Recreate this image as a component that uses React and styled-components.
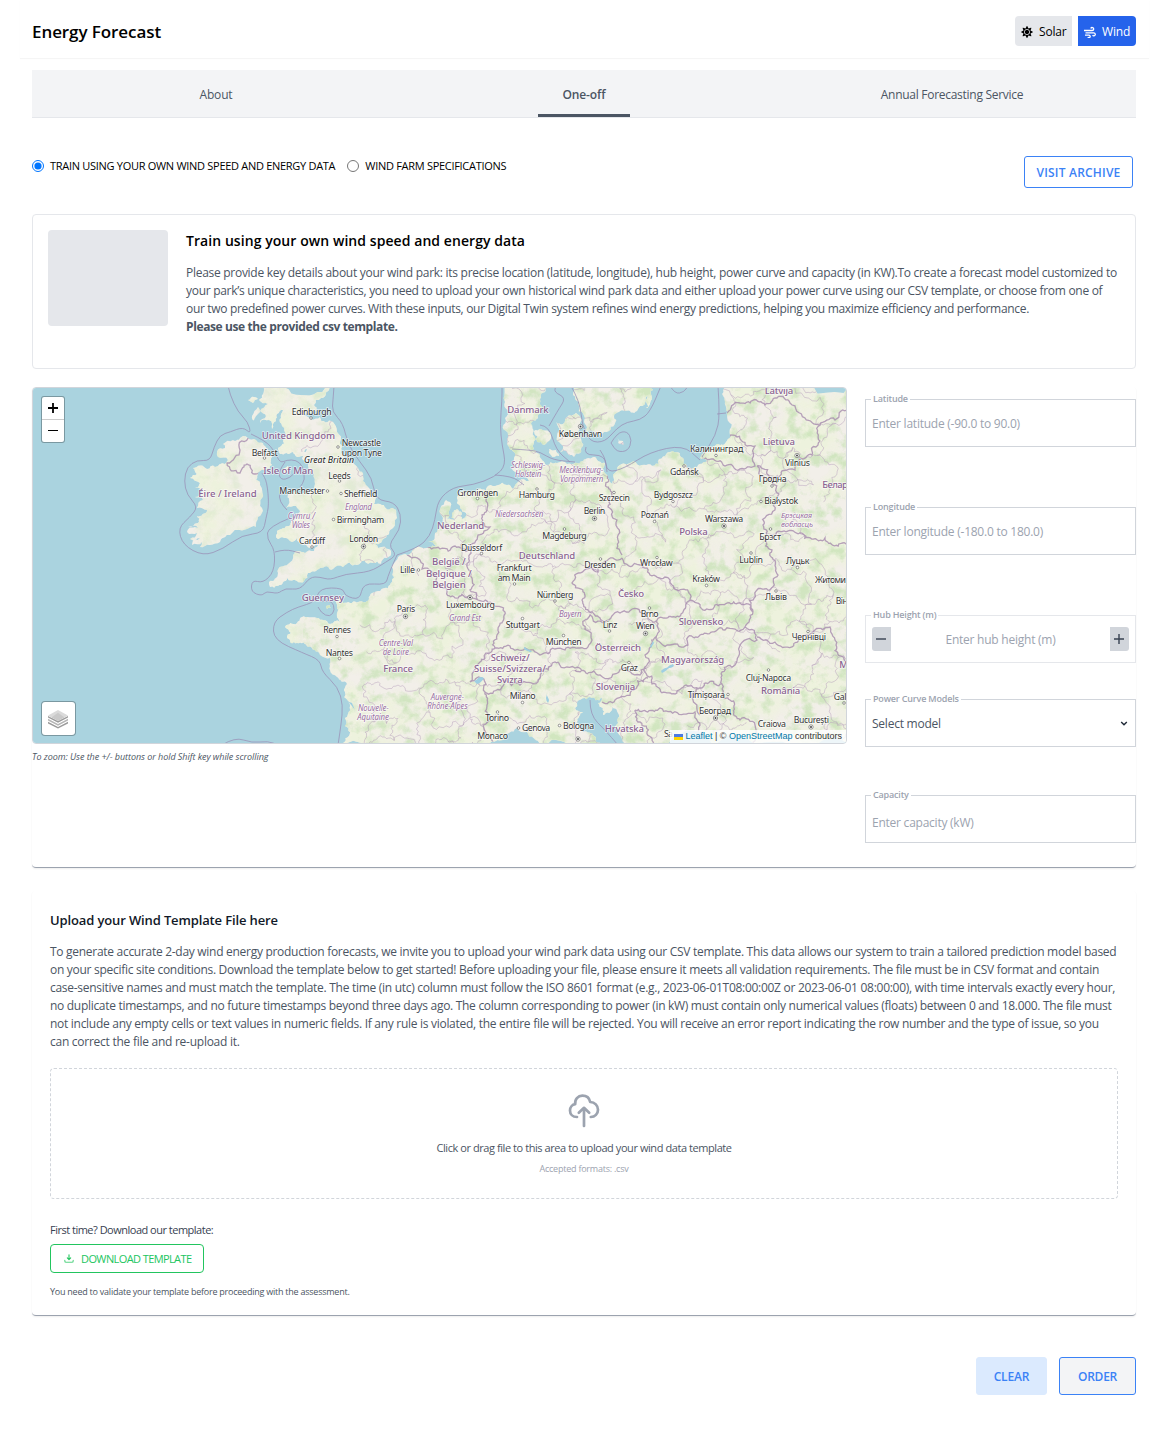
import React from "react";
import styled, { createGlobalStyle, css } from "styled-components";
import { FaSun } from "react-icons/fa";

const GlobalStyle = createGlobalStyle`
  *, *::before, *::after { box-sizing: border-box; }
  body {
    margin: 0;
    background: #fff;
    color: #000;
    font-family: "Open Sans", "Noto Sans", sans-serif;
    font-size: 12px;
    line-height: 18px;
  }
  h1, h2, h3, p { margin: 0; }
  button, input { font-family: inherit; }
`;

/* ---------- shell ---------- */

const Page = styled.div`
  display: flex;
  flex-direction: column;
  min-height: 1429px;
  padding: 0 20px;
`;

const Header = styled.header`
  display: flex;
  align-items: center;
  justify-content: space-between;
  height: 58px;
  padding: 4px 13px 0 12px;
  box-shadow: 0 1px 1px rgba(0, 0, 0, 0.04);
`;

const Title = styled.h1`
  padding-top: 2px;
  font-size: 17px;
  font-weight: 600;
  line-height: 24px;
  letter-spacing: -0.08px;
`;

const EnergySwitch = styled.div`
  display: flex;
  gap: 6px;
`;

const EnergyButton = styled.button`
  display: flex;
  align-items: center;
  gap: 6px;
  width: ${(p) => (p.$active ? 58 : 57)}px;
  height: 30px;
  padding: 1px 0 0 6px;
  border: 0;
  border-radius: ${(p) => (p.$active ? "0 4px 4px 0" : "4px 0 0 4px")};
  background: ${(p) => (p.$active ? "#2563eb" : "#e5e7eb")};
  color: ${(p) => (p.$active ? "#fff" : "#000")};
  font-size: 12px;
  letter-spacing: -0.19px;
`;

const Content = styled.main`
  display: flex;
  flex-direction: column;
  width: 1104px;
  margin: 12px 0 0 12px;
`;

/* ---------- tabs ---------- */

const Tabs = styled.nav`
  display: grid;
  grid-template-columns: repeat(3, 1fr);
  height: 48px;
  background: #f3f4f6;
  border-bottom: 1px solid #e5e7eb;
`;

const Tab = styled.a`
  display: flex;
  justify-content: center;
  justify-self: center;
  align-items: center;
  height: 47px;
  padding: 5px 24.4px 0;
  border-bottom: 3px solid ${(p) => (p.$active ? "#4b5563" : "transparent")};
  color: #4b5563;
  font-weight: ${(p) => (p.$active ? 600 : 400)};
  letter-spacing: ${(p) => p.$spacing}px;
`;

/* ---------- mode row ---------- */

const ModeRow = styled.div`
  display: flex;
  justify-content: space-between;
  align-items: flex-start;
  height: 96px;
  padding: 38px 3px 0 0;
`;

const ModeList = styled.div`
  display: flex;
  gap: 12px;
  padding-top: 1px;
`;

const ModeOption = styled.label`
  display: flex;
  align-items: center;
  gap: 6px;
  font-size: 11px;
  font-weight: 500;
  letter-spacing: -0.29px;
  white-space: nowrap;
`;

const Radio = styled.input`
  width: 12px;
  height: 12px;
  margin: 0;
  accent-color: #0075ff;
`;

const ArchiveButton = styled.button`
  width: 109px;
  height: 32px;
  padding: 0;
  border: 1px solid #3b82f6;
  border-radius: 3px;
  background: #fff;
  color: #3b82f6;
  font-size: 12px;
  font-weight: 600;
  letter-spacing: 0.2px;
`;

/* ---------- info card ---------- */

const InfoCard = styled.section`
  display: flex;
  gap: 18px;
  height: 155px;
  padding: 15px;
  border: 1px solid #e5e7eb;
  border-radius: 4px;
`;

const Thumbnail = styled.div`
  width: 120px;
  height: 96px;
  border-radius: 4px;
  background: #e5e7eb;
`;

const InfoHeading = styled.h2`
  margin-bottom: 12px;
  font-size: 14px;
  font-weight: 600;
  line-height: 22px;
  letter-spacing: 0.066px;
`;

const Line = styled.p`
  height: 18px;
  color: #4b5563;
  font-weight: ${(p) => (p.$bold ? 700 : 400)};
  letter-spacing: ${(p) => p.$spacing}px;
  white-space: nowrap;
`;

/* ---------- location panel ---------- */

const panel = css`
  border-bottom: 1px solid #9ca3af;
  border-radius: 4px;
  box-shadow: 0 1px 2px rgba(0, 0, 0, 0.07);
`;

const LocationPanel = styled.section`
  ${panel}
  display: flex;
  gap: 18px;
  height: 481px;
  margin-top: 18px;
`;

const MapColumn = styled.div`
  width: 815px;
`;

const MapFrame = styled.div`
  position: relative;
  height: 357px;
  border: 1px solid #d1d5db;
  border-radius: 4px;
  overflow: hidden;

  & > svg { display: block; }
`;

const ZoomControl = styled.div`
  position: absolute;
  top: 8px;
  left: 8px;
  display: flex;
  flex-direction: column;
  width: 24px;
  border: 1px solid rgba(0, 0, 0, 0.28);
  border-radius: 3px;
  background: #fff;
  background-clip: padding-box;
`;

const ZoomButton = styled.button`
  display: flex;
  align-items: center;
  justify-content: center;
  height: ${(p) => (p.$first ? 23 : 22)}px;
  padding: 0;
  border: 0;
  border-bottom: ${(p) => (p.$first ? "1px solid #ccc" : "0")};
  background: none;
`;

const LayersButton = styled.button`
  position: absolute;
  left: 8px;
  bottom: 7px;
  display: flex;
  align-items: center;
  justify-content: center;
  width: 35px;
  height: 35px;
  padding: 0 2px 0 0;
  border: 1px solid rgba(0, 0, 0, 0.28);
  border-radius: 4px;
  background: #fff;
  background-clip: padding-box;
`;

const Attribution = styled.div`
  position: absolute;
  right: 0;
  bottom: 0;
  display: flex;
  align-items: center;
  gap: 2px;
  height: 13px;
  padding: 0 4px;
  background: rgba(255, 255, 255, 0.8);
  color: #333;
  font: 9px/13px "Liberation Sans", sans-serif;
  white-space: pre;
`;

const MapLink = styled.a`
  color: #0078a8;
`;

const MapHint = styled.p`
  margin-top: 4px;
  color: #4b5563;
  font-size: 9px;
  font-style: italic;
  letter-spacing: -0.045px;
`;

const Form = styled.div`
  display: flex;
  flex-direction: column;
  width: 271px;
  padding-top: 6px;
`;

const Field = styled.fieldset`
  display: flex;
  align-items: center;
  justify-content: space-between;
  height: 54px;
  min-width: 0;
  margin: 0 0 ${(p) => p.$after}px;
  padding: 0 6px;
  border: 1px solid ${(p) => (p.$light ? "#e5e7eb" : "#d1d5db")};
`;

const Legend = styled.legend`
  height: 12px;
  margin-left: -1px;
  padding: 0 2px;
  color: #9ca3af;
  font-size: 9px;
  font-weight: 600;
  line-height: 12px;
  letter-spacing: -0.17px;
`;

const FieldRow = styled.div`
  display: flex;
  flex: 1;
  align-items: center;
  justify-content: space-between;
  height: 36px;
  margin-top: ${(p) => p.$drop || 0}px;
`;

const TextInput = styled.input`
  flex: 1;
  min-width: 0;
  height: 24px;
  padding: 0;
  border: 0;
  outline: 0;
  background: none;
  font-size: 12px;
  letter-spacing: -0.24px;
  text-align: ${(p) => (p.$center ? "center" : "left")};

  &::placeholder { color: #9ca3af; opacity: 1; }
`;

const SelectValue = styled.span`
  color: #4b5563;
  letter-spacing: -0.24px;
`;

const StepButton = styled.button`
  display: flex;
  align-items: center;
  justify-content: center;
  width: 19px;
  height: 24px;
  padding: 0 1px 0 0;
  border: 0;
  border-radius: ${(p) => (p.$right ? "0 3px 3px 0" : "3px 0 0 3px")};
  background: #d1d5db;
`;

/* ---------- upload panel ---------- */

const UploadPanel = styled.section`
  ${panel}
  display: flex;
  flex-direction: column;
  height: 425px;
  margin-top: 23px;
  padding: 19px 18px 0;
`;

const UploadHeading = styled.h3`
  margin-bottom: 13px;
  color: #111827;
  font-size: 13px;
  font-weight: 600;
  line-height: 20px;
  letter-spacing: -0.13px;
`;

const DropZone = styled.div`
  display: flex;
  flex-direction: column;
  align-items: center;
  height: 131px;
  margin-top: 17px;
  padding-top: 25px;
  border: 1px dashed #d1d5db;
  border-radius: 4px;
`;

const DropText = styled.p`
  margin-top: 11px;
  color: #4b5563;
  font-size: 11px;
  letter-spacing: -0.43px;
`;

const DropHint = styled.p`
  margin-top: 3px;
  color: #9ca3af;
  font-size: 9px;
  letter-spacing: -0.23px;
`;

const TemplateLabel = styled.p`
  margin-top: 22px;
  color: #374151;
  font-size: 11px;
  letter-spacing: -0.5px;
`;

const DownloadButton = styled.button`
  display: flex;
  align-items: center;
  gap: 7px;
  width: 154px;
  height: 29px;
  margin-top: 5px;
  padding: 0 0 1px 13px;
  border: 1px solid #22c55e;
  border-radius: 4px;
  background: #fff;
  color: #22c55e;
  font-size: 11px;
  letter-spacing: -0.6px;
  white-space: nowrap;
`;

const TemplateNote = styled.p`
  margin-top: 10px;
  color: #4b5563;
  font-size: 9px;
  letter-spacing: -0.24px;
`;

const Actions = styled.footer`
  display: flex;
  justify-content: flex-end;
  gap: 12px;
  margin-top: 41px;
`;

const ActionButton = styled.button`
  width: ${(p) => (p.$outlined ? 77 : 71)}px;
  height: 38px;
  padding: 0;
  border: 1px solid ${(p) => (p.$outlined ? "#3b82f6" : "#dbeafe")};
  border-radius: 3px;
  background: ${(p) => (p.$outlined ? "#f3f4f6" : "#dbeafe")};
  color: #3b82f6;
  font-size: 12px;
  font-weight: 600;
  letter-spacing: ${(p) => (p.$outlined ? -0.25 : -0.15)}px;
`;

/* ---------- map geometry ---------- */

function makeRandom(seed) {
  let s = seed;
  return () => {
    s = (s * 16807) % 2147483647;
    return s / 2147483647;
  };
}

// Breaks each segment of a polyline into small displaced steps.
function rough(points, amount, seed, closed = false) {
  const rnd = makeRandom(seed * 7919 + 13);
  const split = (a, b, depth) => {
    const d = Math.hypot(b[0] - a[0], b[1] - a[1]);
    if (d < 3 || depth === 0) return [b];
    const k = (rnd() - 0.5) * amount;
    const m = [(a[0] + b[0]) / 2 - (b[1] - a[1]) * k, (a[1] + b[1]) / 2 + (b[0] - a[0]) * k];
    return [...split(a, m, depth - 1), ...split(m, b, depth - 1)];
  };
  let out = [points[0]];
  for (let i = 1; i < points.length; i++) out = out.concat(split(points[i - 1], points[i], 4));
  return "M" + out.map((p) => p[0].toFixed(1) + " " + p[1].toFixed(1)).join("L") + (closed ? "Z" : "");
}

// Quadratic smoothing through segment midpoints, used for sea boundaries.
function smooth(points) {
  let d = `M${points[0][0]} ${points[0][1]}`;
  for (let i = 1; i < points.length - 1; i++) {
    const [x, y] = points[i];
    const [nx, ny] = points[i + 1];
    d += `Q${x} ${y} ${(x + nx) / 2} ${(y + ny) / 2}`;
  }
  const last = points[points.length - 1];
  return d + `L${last[0]} ${last[1]}`;
}

const pts = (s) => s.trim().split(/\s+/).map((p) => p.split(",").map(Number));

const LAND = [
  // Ireland
  "243,436 248,438 256,440 263,443 268,449 272,457 272,465 266,470 258,473 260,485 262,498 262,508 258,517 256,527 247,529 237,530 230,535 220,542 210,545 200,547 202,542 192,545 200,538 190,539 197,533 187,532 198,528 188,526 199,522 197,516 207,510 197,508 203,500 195,497 203,491 195,488 200,483 190,478 197,474 193,468 207,469 215,467 225,464 228,460 218,457 217,452 225,448 223,444 233,440 243,436",
  // Great Britain
  "263,386 263,394 259,400 268,404 260,411 266,416 260,423 269,420 272,429 276,421 283,410 281,418 282,426 286,436 278,448 280,454 293,452 297,457 307,449 302,459 308,466 314,474 315,484 311,492 301,493 288,494 289,500 286,508 296,506 300,512 297,518 289,526 277,531 278,539 290,541 297,538 303,545 309,548 318,545 314,551 305,553 293,555 288,564 278,573 269,582 270,587 278,586 287,578 297,581 304,581 308,573 320,568 333,569 343,567 357,565 373,563 387,558 391,551 378,548 375,544 385,538 393,528 397,518 393,508 380,504 372,505 376,498 369,488 363,481 358,468 350,463 343,455 340,442 337,432 333,422 320,417 303,416 317,411 314,405 321,398 329,390 329,386 263,386",
  // Hebrides, Isle of Man, Channel Islands
  "248,400 254,397 258,399 253,403 248,400",
  "252,416 258,407 260,412 255,422 252,416",
  "284,469 288,466 288,471 285,474 284,469",
  "326,606 330,605 331,608 327,609 326,606",
  // Continent
  "505,386 505,402 505,418 508,435 512,450 515,456 513,465 518,475 529,481 519,481 513,489 507,485 488,486 486,491 478,489 460,492 457,497 460,508 466,513 462,519 457,509 452,513 455,521 447,519 449,511 450,502 446,500 443,518 437,532 428,542 436,546 423,548 407,555 395,562 393,572 392,582 388,588 372,593 363,602 350,603 343,603 340,597 333,598 337,608 340,622 330,624 317,618 307,617 297,623 285,627 291,633 287,638 297,643 308,647 320,655 330,658 330,670 337,677 347,684 345,692 348,701 345,718 342,745 490,745 503,740 517,728 527,732 540,745 602,745 583,732 577,722 583,712 575,708 577,703 590,697 602,698 598,703 603,715 612,707 618,718 634,745 850,745 850,386 725,386 725,402 727,415 730,435 723,445 712,447 700,458 707,460 697,467 683,464 680,453 670,452 642,465 613,475 613,486 608,478 605,463 595,457 583,461 567,464 557,463 545,466 540,455 533,450 534,436 531,424 538,415 543,408 540,399 545,386 505,386",
  // Danish islands
  "534,431 541,429 549,432 550,440 544,445 537,442 534,431",
  "556,422 563,424 567,417 576,413 582,420 579,434 583,446 574,457 566,451 556,455 563,446 557,436 556,422",
  "549,449 556,450 559,456 551,455 549,449",
  // Sweden, Oland, Bornholm
  "572,386 579,402 585,418 586,433 600,435 609,431 614,416 625,411 637,411 645,403 651,386 572,386",
  "651,388 653,390 648,408 646,408 651,388",
  "617,438 623,441 625,446 619,444 617,438",
].map(pts);

const SEA_LINES = [
  "228,386 230,395 238,412 248,422 251,434 243,427 230,432 220,435 214,447 210,461 197,460 187,467 184,481 187,495 198,507 190,517 178,528 183,545 203,556 223,549 242,535 263,533 266,518 269,505 267,482 262,473",
  "251,434 266,441 275,452 280,463 287,460 296,460 303,466 305,480 300,487",
  "285,462 278,472 281,480 290,478 297,470",
  "287,486 279,492 280,502 287,510",
  "290,518 268,527 267,539 275,550 274,572 263,583 252,580 251,592 262,596 266,591 278,594 285,588 300,590 310,577 320,577 330,580 345,574 370,572 386,562 397,555 388,545 400,530 401,514 394,502 376,500 372,478 360,462 348,445 343,423 332,412 333,400 334,386",
  "275,552 285,549 300,553",
  "397,555 388,575 386,585 363,583 360,600 345,596 343,588 320,588 315,602 298,607 287,612 273,622 274,640 303,653 320,660 322,672 338,687 343,705 341,725 338,745",
  "318,607 321,613 330,617 335,610 332,601 320,601",
  "397,555 418,548 430,536 435,520 438,500 453,487 473,485 495,477 506,465 502,445 500,425 502,400 502,386",
  "495,475 512,476 524,485",
  "512,449 530,450 540,452 553,460 575,462",
  "540,425 549,426 556,450 570,462",
  "549,426 558,410 566,398 554,392 556,386",
  "571,386 580,402 582,425 590,442 605,442 617,428 627,422 640,420 650,412 661,386",
  "586,447 583,455 605,455 607,473 625,468 650,452 683,445 700,460",
  "607,472 606,460 600,450",
  "718,386 720,415 716,435 702,457",
  "717,414 726,413",
  "670,386 675,394 684,392 688,386",
  "611,443 617,433 627,431 632,440 628,451 617,452 611,443",
  "222,745 235,737 252,743 268,741 278,745",
  "590,700 590,715 605,730 618,745",
].map(pts);

const BORDERS = [
  "407,555 420,560 422,569 436,580 447,592 468,597 478,600 492,603 505,612 497,635 495,648",
  "423,548 440,549 455,546 470,550 469,562 472,578 470,590 478,600",
  "487,492 487,510 482,522 490,527 478,535 470,550",
  "495,648 510,646 525,648 540,655 555,649 565,650 580,648 592,640 583,625 590,615 605,622",
  "495,648 480,662 470,682 482,678 485,692 487,705 483,725 493,742",
  "485,692 500,690 505,680 520,685 538,682 538,668 555,662 575,668 582,671",
  "622,558 598,572 572,583 582,600 600,618 605,622",
  "608,475 612,495 608,507 617,520 618,540 622,555",
  "622,558 640,565 650,575 665,577 672,585 690,600 715,605 740,603 753,612",
  "753,612 757,590 778,575 772,550 763,525 775,510 770,480 757,466",
  "700,463 725,466 755,466 755,446 727,437",
  "727,413 740,403 765,405 790,403 805,418 820,425 812,455 795,470 775,478 757,466",
  "820,425 835,420 847,410",
  "773,537 800,533 825,538 847,545",
  "605,622 620,613 650,620 672,617 690,600",
  "657,620 657,635 670,645 688,645 688,637 700,635 725,630 745,627 753,612",
  "657,637 645,655 645,672 652,684 675,694 700,688 722,684 735,665 757,640 745,627",
  "757,637 775,642 792,647 815,630 830,627 836,645 847,662",
  "575,670 600,675 640,675 646,668",
  "602,702 615,700 632,690 648,678",
  "635,710 660,708 695,712 700,725 697,745",
  "635,710 640,722 655,745",
  "700,688 693,700 700,715",
  "722,684 730,700 740,720 755,725 752,745",
  "250,437 240,450 227,463 240,473 247,464 255,474 265,472",
].map(pts);

const LAKES = [
  "661,671 673,664 674,666 662,673",
  "474,681 480,677 484,678 477,684",
  "524,647 530,650 532,652 524,649",
  "547,694 549,700 548,703 546,698",
  "650,646 653,641 654,643 651,648",
  "347,700 352,703 355,712 352,706",
].map(pts);

// Jittered grid that stands for regional boundaries.
const REGIONS = (() => {
  const rnd = makeRandom(4242);
  const cols = 18;
  const rows = 13;
  const grid = [];
  for (let r = 0; r < rows; r++) {
    const row = [];
    for (let c = 0; c < cols; c++) {
      row.push([360 + c * 29 + (r % 2) * 13 + (rnd() - 0.5) * 16, 388 + r * 30 + (rnd() - 0.5) * 16]);
    }
    grid.push(row);
  }
  const out = [];
  for (let r = 0; r < rows; r++) {
    for (let c = 0; c < cols; c++) {
      if (c + 1 < cols && rnd() < 0.72) out.push([grid[r][c], grid[r][c + 1]]);
      if (r + 1 < rows && rnd() < 0.6) out.push([grid[r][c], grid[r + 1][c]]);
    }
  }
  out.push(pts("309,484 313,500 308,515 315,528 309,540"));
  out.push(pts("302,452 315,446 328,432 337,422"));
  return out;
})();

// text, left, right, baseline, kind (c city, n nation, r region, g island)
const LABELS = [
  ["Éire / Ireland", 198.3, 256.7, 496.5, "n"], ["Belfast", 251.7, 277.7, 456, "c"],
  ["Isle of Man", 263.3, 313.3, 473.5, "n"], ["United Kingdom", 261.7, 335, 439, "n"],
  ["Edinburgh", 291.7, 331.7, 415, "c"], ["Manchester", 279.3, 325, 494, "c"],
  ["Cymru /", 287.7, 315, 519, "r"], ["Wales", 291.7, 310, 527.5, "r"], ["Cardiff", 299, 325, 544, "c"],
  ["Newcastle", 341.7, 381, 445.5, "c"], ["upon Tyne", 341.7, 382, 455.5, "c"],
  ["Great Britain", 304, 354, 463, "g"], ["Leeds", 328.3, 350.7, 479, "c"],
  ["Sheffield", 344, 377.3, 496.7, "c"], ["England", 345, 372, 510, "r"],
  ["Birmingham", 336.7, 384.3, 522.5, "c"], ["London", 349.3, 378.3, 541.7, "c"],
  ["Danmark", 507.3, 548.7, 413, "n"], ["Schleswig-", 511, 545.3, 467.5, "r"],
  ["Holstein", 515, 541.3, 476.5, "r"], ["Groningen", 457.3, 498.3, 495.5, "c"],
  ["Hamburg", 518.7, 555, 498, "c"], ["Niedersachsen", 495, 543.3, 516.5, "r"],
  ["Nederland", 437, 484.3, 528.7, "n"], ["Düsseldorf", 461, 502.3, 550.7, "c"],
  ["Magdeburg", 542.3, 586.7, 538.5, "c"], ["Deutschland", 518.7, 575.3, 558.5, "n"],
  ["Frankfurt", 496.7, 531.7, 570.7, "c"], ["am Main", 497.7, 530.7, 580.7, "c"],
  ["België /", 432, 465.7, 565, "n"], ["Lille", 400, 415, 572.5, "c"],
  ["Belgique /", 426, 471.7, 576.5, "n"], ["Belgien", 432.3, 465.7, 587.7, "n"],
  ["København", 558.7, 602.3, 436.7, "c"], ["Mecklenburg-", 559.3, 603.3, 473, "r"],
  ["Vorpommern", 560, 603.3, 481.7, "r"], ["Latvija", 764.7, 793.3, 393.5, "n"],
  ["Калининград", 690, 743.3, 451.7, "c"], ["Lietuva", 762.7, 795, 444.5, "n"],
  ["Vilnius", 785, 810, 465.5, "c"], ["Gdańsk", 670, 698.7, 475, "c"],
  ["Гродна", 758.7, 786.7, 482, "c"], ["Белар", 822.3, 848, 487.5, "n"],
  ["Bydgoszcz", 653.7, 693, 497.7, "c"], ["Szczecin", 598.7, 630, 501, "c"],
  ["Białystok", 764.3, 798.3, 503.7, "c"], ["Berlin", 583.7, 605.3, 514, "c"],
  ["Poznań", 640.7, 669, 518, "c"], ["Warszawa", 705, 743.3, 521.7, "c"],
  ["Брэсцкая", 781, 812, 517.5, "r"], ["вобласць", 781, 813, 526.5, "r"],
  ["Polska", 679.3, 707.7, 535, "n"], ["Брэст", 759.3, 781, 539.5, "c"],
  ["Lublin", 739.3, 763, 562.5, "c"], ["Луцьк", 786, 809.3, 563.7, "c"],
  ["Dresden", 584.3, 616, 567.7, "c"], ["Wrocław", 640, 672.7, 565.7, "c"],
  ["Kraków", 692.3, 720, 582, "c"], ["Житоми", 815, 846, 582.7, "c"],
  ["Guernsey", 301.7, 344, 601.3, "n"], ["Paris", 396.7, 415.3, 612.3, "c"],
  ["Luxembourg", 446, 495, 608, "c"], ["Nürnberg", 536.7, 573.3, 598.3, "c"],
  ["Grand Est", 449, 481, 620.7, "r"], ["Stuttgart", 505.7, 540, 628, "c"],
  ["Bayern", 559, 581.7, 617.3, "r"], ["Rennes", 323.3, 351, 633, "c"],
  ["München", 545.7, 581.7, 644.7, "c"], ["Centre-Val", 378.7, 413, 645.7, "r"],
  ["de Loire", 382.7, 409, 654.7, "r"], ["Nantes", 325.7, 353, 655.7, "c"],
  ["France", 383.3, 413, 672, "n"], ["Schweiz/", 490.7, 529.7, 660.7, "n"],
  ["Suisse/Svizzera/", 474, 546, 672, "n"], ["Svizra", 497, 522.7, 683.3, "n"],
  ["Milano", 509.7, 535.7, 699, "c"], ["Auvergne-", 430.7, 464, 700, "r"],
  ["Rhône-Alpes", 427.3, 467.7, 709, "r"], ["Nouvelle-", 358, 388.7, 711, "r"],
  ["Aquitaine", 357.3, 389, 719.7, "r"], ["Torino", 485.3, 509, 720.7, "c"],
  ["Genova", 522, 550.3, 730.7, "c"], ["Bologna", 563, 594.3, 728.7, "c"],
  ["Monaco", 477.3, 508, 739, "c"], ["Česko", 618, 644, 596.5, "n"],
  ["Львів", 765, 787, 600.3, "c"], ["Він", 835.7, 848, 604, "c"], ["Brno", 640.7, 658.7, 616.7, "c"],
  ["Linz", 602.7, 617.3, 627.7, "c"], ["Wien", 636, 654.7, 628.7, "c"],
  ["Slovensko", 678.7, 723.3, 624.7, "n"], ["Чернівці", 791.7, 826, 640.3, "c"],
  ["Österreich", 594.7, 641, 650.7, "n"], ["Graz", 620.7, 638, 671.3, "c"],
  ["Magyarország", 661, 724.3, 663.3, "n"], ["Cluj-Napoca", 745.7, 791.3, 680.7, "c"],
  ["M", 839.3, 847.5, 668, "n"], ["Slovenija", 595.7, 635.3, 689.7, "n"],
  ["România", 761, 800.3, 693.7, "n"], ["Timișoara", 687.7, 725, 698.3, "c"],
  ["Gal", 833.7, 846.5, 699.5, "c"], ["Београд", 699, 731, 713.7, "c"],
  ["Hrvatska", 604.7, 644, 731.7, "n"], ["Craiova", 757.7, 786, 726.7, "c"],
  ["București", 793.7, 829, 722.7, "c"], ["Sa", 664, 673, 736.5, "c"],
];

const TOWNS = pts(
  "264.5,458 338,447 311,418 339.5,481 327.5,491 341,493.5 333.5,519.5 312,547 477.5,498.5 537,489 481.5,553.5 564.5,529 514.5,584 418.5,570 716,455.5 684,466 772,486 614,492.5 673,501.5 761,501.5 654.5,521.5 770.5,529 751,553 797.5,567.5 600.5,559 657,557.5 706.5,585.5 337,636.5 339.5,658.5 522.5,618.5 563.5,635.5 522.5,702.5 497.5,712 559.5,725.5 518.5,728 776,591 649.5,608 609.5,631 629,662.5 808,631.5 768.5,670 728,694.5 555,601 844,703"
);
const CAPITALS = pts("363.5,546.5 580.5,426.5 797,455.5 594.5,518.5 724,526 405.5,616.5 470,597.5 645.5,633.5 715.5,718 811,727 578,739");

const landPath = LAND.map((l, i) => rough(l, 0.5, i + 3, true)).join("");
const seaPath = SEA_LINES.map(smooth).join("");
const borderPath = BORDERS.map((b, i) => rough(b, 0.55, i + 40)).join("");
const regionPath = REGIONS.map((b, i) => rough(b, 0.7, i + 90)).join("");
const lakePath = LAKES.map((b, i) => rough(b, 0.2, i + 300, true)).join("");

const MapLabel = styled.text`
  font-family: "Noto Sans", sans-serif;
  font-size: ${(p) => ({ c: 8.8, n: 9.6, r: 8, g: 8.8 })[p.$kind]}px;
  font-style: ${(p) => (p.$kind === "r" || p.$kind === "g" ? "italic" : "normal")};
  font-weight: ${(p) => (p.$kind === "n" ? 500 : 400)};
  fill: ${(p) => ({ c: "#333", n: "#8a6391", r: "#9a6fa3", g: "#222" })[p.$kind]};
  stroke: rgba(255, 255, 255, 0.65);
  stroke-width: 1.6px;
  stroke-linejoin: round;
  paint-order: stroke;
`;

function EuropeMap() {
  return (
    <svg width="813" height="355" viewBox="33 388 813 355">
      <defs>
        <clipPath id="land"><path d={landPath} /></clipPath>
        <filter id="woods" x="0" y="0" width="100%" height="100%" colorInterpolationFilters="sRGB">
          <feTurbulence type="fractalNoise" baseFrequency="0.075" numOctaves="5" seed="11" />
          <feColorMatrix values="0 0 0 0 0.78  0 0 0 0 0.885  0 0 0 0 0.71  3.6 0 0 0 -1.72" />
        </filter>
        <filter id="fields" x="0" y="0" width="100%" height="100%" colorInterpolationFilters="sRGB">
          <feTurbulence type="fractalNoise" baseFrequency="0.03" numOctaves="4" seed="5" />
          <feColorMatrix values="0 0 0 0 0.93  0 0 0 0 0.95  0 0 0 0 0.86  0 3 0 0 -1" />
        </filter>
      </defs>
      <rect x="33" y="388" width="813" height="355" fill="#aad3df" />
      <path d={landPath} fill="#f2efe9" />
      <g clipPath="url(#land)">
        <rect x="33" y="388" width="813" height="355" filter="url(#fields)" opacity=".85" />
        <rect x="33" y="388" width="270" height="355" filter="url(#woods)" opacity=".3" />
        <rect x="303" y="388" width="100" height="190" filter="url(#woods)" opacity=".35" />
        <rect x="303" y="578" width="100" height="165" filter="url(#woods)" opacity=".7" />
        <rect x="403" y="388" width="443" height="355" filter="url(#woods)" opacity=".75" />
        <path d={regionPath} fill="none" stroke="#b59dba" strokeWidth=".7" opacity=".65" />
        <path d={borderPath} fill="none" stroke="#a68bae" strokeWidth="1.3" opacity=".8" />
      </g>
      <path d={lakePath} fill="#9fcfe2" />
      <path d={seaPath} fill="none" stroke="#9a8fb5" strokeWidth="1" opacity=".75" />
      <g fill="#fff" stroke="#555" strokeWidth=".6">
        {TOWNS.map(([x, y]) => <circle key={`${x},${y}`} cx={x} cy={y} r="1.3" />)}
        {CAPITALS.map(([x, y]) => <circle key={`${x},${y}`} cx={x} cy={y} r="2.2" />)}
      </g>
      <g fill="#444">
        {CAPITALS.map(([x, y]) => <circle key={`${x},${y}`} cx={x} cy={y} r="1" />)}
      </g>
      {LABELS.map(([text, x1, x2, y, kind]) => (
        <MapLabel key={text} $kind={kind} x={x1} y={y} textLength={x2 - x1}>{text}</MapLabel>
      ))}
    </svg>
  );
}

/* ---------- icons ---------- */

const WindIcon = () => (
  <svg width="12" height="12" viewBox="0 0 12 12" fill="none" stroke="currentColor" strokeWidth="1.3">
    <path d="M0 4.500h8.200a1.500 1.500 0 1 0-1.400-2" />
    <path d="M1.500 6.900h8.300a1.450 1.450 0 1 1-1.200 2.200" />
    <path d="M1 9.200h4a1.200 1.200 0 1 1-1.100 1.700" />
  </svg>
);

const LayersIcon = () => (
  <svg width="22" height="20" viewBox="0 0 22 20">
    <path d="M1 12.8 11 18l10-5.2v1.6L11 19.6 1 14.4z" fill="#9a9a9a" />
    <path d="M1 9.8 11 15l10-5.2v1.800L11 16.800 1 11.600z" fill="#b5b5b5" />
    <path d="M1 7 11 12l10-5v1.500L11 13.800 1 8.500z" fill="#9a9a9a" />
    <path d="M11 1 21 6.500 11 12 1 6.500z" fill="#dadada" />
    <path d="M11 3.800 17.500 8.400 11 12 4.500 8.400z" fill="#c2c2c2" opacity=".7" />
  </svg>
);

const CloudIcon = () => (
  <svg width="32" height="34" viewBox="0 0 32 34" fill="none" stroke="#9ca3af" strokeWidth="2.7" strokeLinecap="round" strokeLinejoin="round">
    <path d="M9 23C4.600 23 2 20 2 16.400C2 13.200 4.200 10.700 7.200 10.200C6.600 5.200 10 1.700 14.400 1.700C18.400 1.700 21.400 4.200 22.200 8C26.800 8.200 30 11.500 30 15.700C30 19.800 27 23 22.800 23" />
    <path d="M10.800 18.800 16 13.800l5.200 5M16 14.500V32" />
  </svg>
);

const DownloadIcon = () => (
  <svg width="10" height="10" viewBox="0 0 10 10" fill="none" stroke="#22c55e" strokeWidth="1.100" strokeLinecap="round" strokeLinejoin="round">
    <path d="M5 1.800v4.600M3.300 4.900 5 6.600l1.700-1.700" />
    <path d="M.8 7.200v.8c0 .8.500 1.300 1.300 1.300h5.800c.8 0 1.300-.5 1.300-1.300v-.8" opacity=".75" />
  </svg>
);

const SignIcon = ({ plus, color = "#374151", width = 1.4, y = 5 }) => (
  <svg width="10" height="10" viewBox="0 0 10 10" stroke={color} strokeWidth={width}>
    <path d={`M0 ${y}h10${plus ? "M5 0v10" : ""}`} />
  </svg>
);

const ChevronSvg = styled.svg`
  margin-right: 1px;
`;

const ChevronIcon = () => (
  <ChevronSvg width="8" height="6" viewBox="0 0 8 6" fill="none" stroke="#1f2937" strokeWidth="1.400">
    <path d="M1.200 1 4 3.800l2.800-2.800" />
  </ChevronSvg>
);

/* ---------- content ---------- */

const INFO = [
  ["Please provide key details about your wind park: its precise location (latitude, longitude), hub height, power curve and capacity (in KW).To create a forecast model customized to", -0.279],
  ["your park’s unique characteristics, you need to upload your own historical wind park data and either upload your power curve using our CSV template, or choose from one of", -0.295],
  ["our two predefined power curves. With these inputs, our Digital Twin system refines wind energy predictions, helping you maximize efficiency and performance.", -0.317],
];

const GUIDE = [
  ["To generate accurate 2-day wind energy production forecasts, we invite you to upload your wind park data using our CSV template. This data allows our system to train a tailored prediction model based", -0.287],
  ["on your specific site conditions. Download the template below to get started! Before uploading your file, please ensure it meets all validation requirements. The file must be in CSV format and contain", -0.284],
  ["case-sensitive names and must match the template. The time (in utc) column must follow the ISO 8601 format (e.g., 2023-06-01T08:00:00Z or 2023-06-01 08:00:00), with time intervals exactly every hour,", -0.284],
  ["no duplicate timestamps, and no future timestamps beyond three days ago. The column corresponding to power (in kW) must contain only numerical values (floats) between 0 and 18.000. The file must", -0.297],
  ["not include any empty cells or text values in numeric fields. If any rule is violated, the entire file will be rejected. You will receive an error report indicating the row number and the type of issue, so you", -0.287],
  ["can correct the file and re-upload it.", -0.26],
];

export default function App() {
  return (
    <>
      <GlobalStyle />
      <Page>
        <Header>
          <Title>Energy Forecast</Title>
          <EnergySwitch>
            <EnergyButton><FaSun size={12} />Solar</EnergyButton>
            <EnergyButton $active><WindIcon />Wind</EnergyButton>
          </EnergySwitch>
        </Header>

        <Content>
          <Tabs>
            <Tab $spacing={-0.16}>About</Tab>
            <Tab $active $spacing={-0.12}>One-off</Tab>
            <Tab $spacing={-0.277}>Annual Forecasting Service</Tab>
          </Tabs>

          <ModeRow>
            <ModeList>
              <ModeOption>
                <Radio type="radio" name="mode" defaultChecked />
                TRAIN USING YOUR OWN WIND SPEED AND ENERGY DATA
              </ModeOption>
              <ModeOption>
                <Radio type="radio" name="mode" />
                WIND FARM SPECIFICATIONS
              </ModeOption>
            </ModeList>
            <ArchiveButton>VISIT ARCHIVE</ArchiveButton>
          </ModeRow>

          <InfoCard>
            <Thumbnail />
            <div>
              <InfoHeading>Train using your own wind speed and energy data</InfoHeading>
              {INFO.map(([text, spacing]) => <Line key={text} $spacing={spacing}>{text}</Line>)}
              <Line $bold $spacing={-0.387}>Please use the provided csv template.</Line>
            </div>
          </InfoCard>

          <LocationPanel>
            <MapColumn>
              <MapFrame>
                <EuropeMap />
                <ZoomControl>
                  <ZoomButton $first><SignIcon plus color="#000" width={1.8} /></ZoomButton>
                  <ZoomButton><SignIcon color="#000" width={1.2} y={4.5} /></ZoomButton>
                </ZoomControl>
                <LayersButton><LayersIcon /></LayersButton>
                <Attribution>
                  <svg width="9" height="6"><path fill="#4c7be1" d="M0 0h9v3H0z" /><path fill="#ffd500" d="M0 3h9v3H0z" /></svg>
                  <span><MapLink>Leaflet</MapLink> | © <MapLink>OpenStreetMap</MapLink> contributors</span>
                </Attribution>
              </MapFrame>
              <MapHint>To zoom: Use the +/- buttons or hold Shift key while scrolling</MapHint>
            </MapColumn>

            <Form>
              <Field $after={54}>
                <Legend>Latitude</Legend>
                <FieldRow><TextInput placeholder="Enter latitude (-90.0 to 90.0)" /></FieldRow>
              </Field>
              <Field $after={54}>
                <Legend>Longitude</Legend>
                <FieldRow><TextInput placeholder="Enter longitude (-180.0 to 180.0)" /></FieldRow>
              </Field>
              <Field $after={30} $light>
                <Legend>Hub Height (m)</Legend>
                <FieldRow>
                  <StepButton><SignIcon /></StepButton>
                  <TextInput $center placeholder="Enter hub height (m)" />
                  <StepButton $right><SignIcon plus /></StepButton>
                </FieldRow>
              </Field>
              <Field $after={42}>
                <Legend>Power Curve Models</Legend>
                <FieldRow $drop={1}><SelectValue>Select model</SelectValue><ChevronIcon /></FieldRow>
              </Field>
              <Field $after={0}>
                <Legend>Capacity</Legend>
                <FieldRow $drop={3}><TextInput placeholder="Enter capacity (kW)" /></FieldRow>
              </Field>
            </Form>
          </LocationPanel>

          <UploadPanel>
            <UploadHeading>Upload your Wind Template File here</UploadHeading>
            {GUIDE.map(([text, spacing]) => <Line key={text} $spacing={spacing}>{text}</Line>)}
            <DropZone>
              <CloudIcon />
              <DropText>Click or drag file to this area to upload your wind data template</DropText>
              <DropHint>Accepted formats: .csv</DropHint>
            </DropZone>
            <TemplateLabel>First time? Download our template:</TemplateLabel>
            <DownloadButton><DownloadIcon />DOWNLOAD TEMPLATE</DownloadButton>
            <TemplateNote>You need to validate your template before proceeding with the assessment.</TemplateNote>
          </UploadPanel>

          <Actions>
            <ActionButton>CLEAR</ActionButton>
            <ActionButton $outlined>ORDER</ActionButton>
          </Actions>
        </Content>
      </Page>
    </>
  );
}
